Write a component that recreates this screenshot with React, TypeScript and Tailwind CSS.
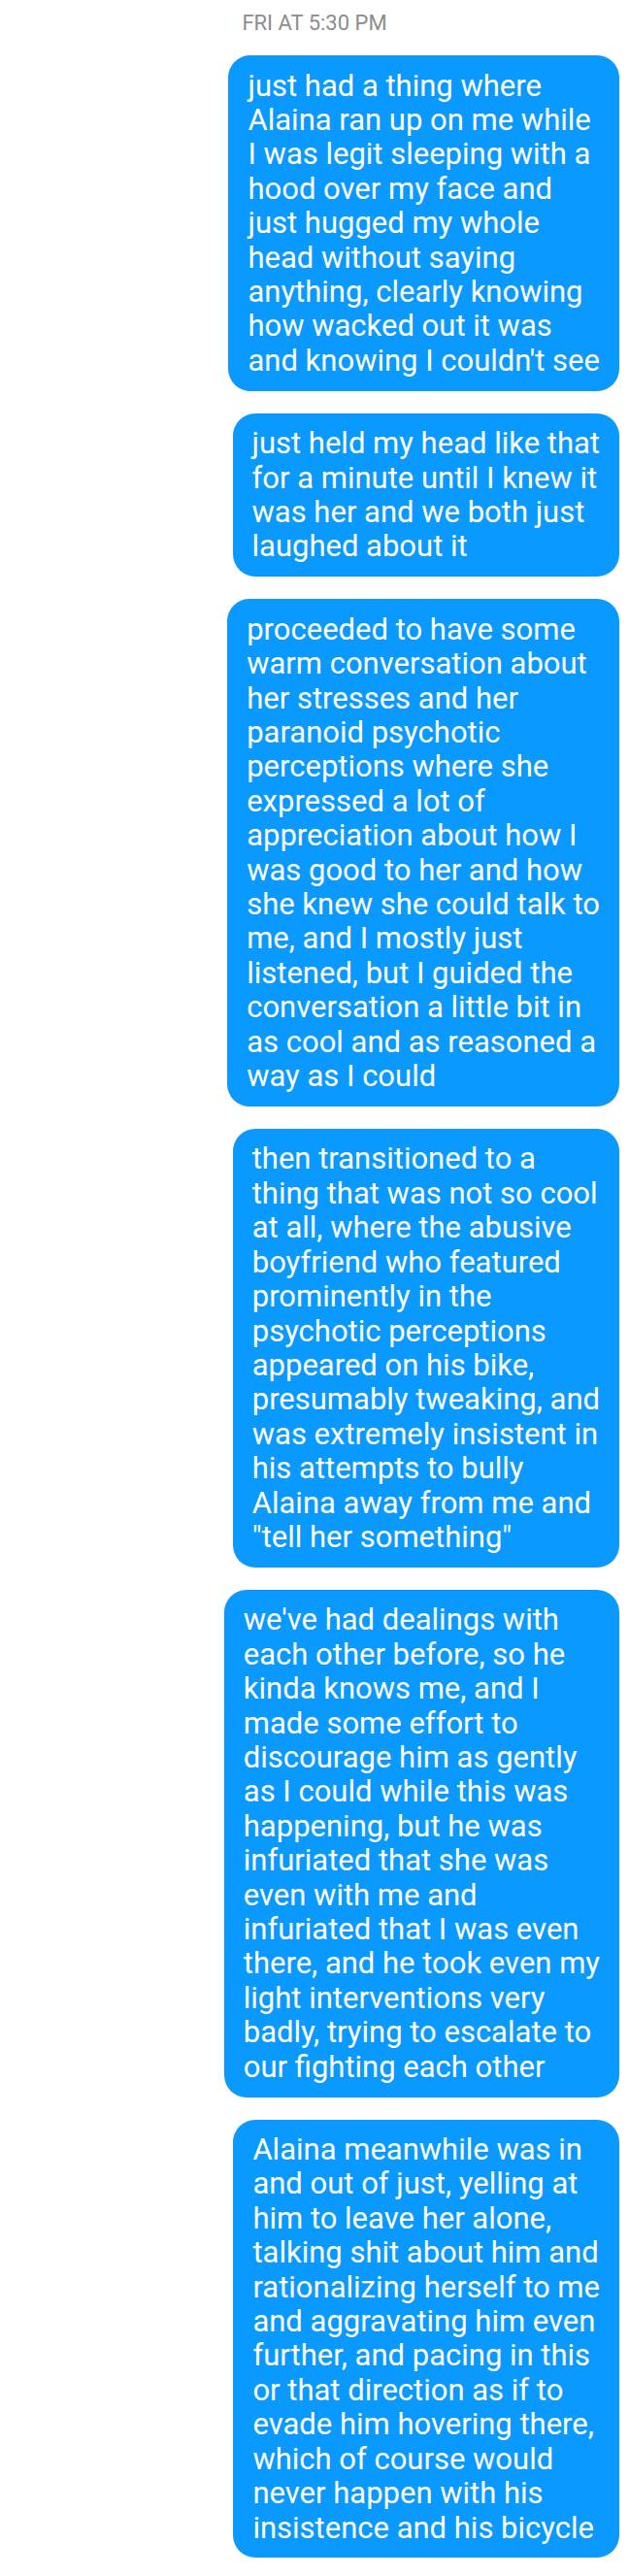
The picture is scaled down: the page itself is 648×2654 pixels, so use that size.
import React from 'react';

const messages: string[][] = [
    [
        'just had a thing where',
        'Alaina ran up on me while',
        'I was legit sleeping with a',
        'hood over my face and',
        'just hugged my whole',
        'head without saying',
        'anything, clearly knowing',
        'how wacked out it was',
        "and knowing I couldn't see",
    ],
    [
        'just held my head like that',
        'for a minute until I knew it',
        'was her and we both just',
        'laughed about it',
    ],
    [
        'proceeded to have some',
        'warm conversation about',
        'her stresses and her',
        'paranoid psychotic',
        'perceptions where she',
        'expressed a lot of',
        'appreciation about how I',
        'was good to her and how',
        'she knew she could talk to',
        'me, and I mostly just',
        'listened, but I guided the',
        'conversation a little bit in',
        'as cool and as reasoned a',
        'way as I could',
    ],
    [
        'then transitioned to a',
        'thing that was not so cool',
        'at all, where the abusive',
        'boyfriend who featured',
        'prominently in the',
        'psychotic perceptions',
        'appeared on his bike,',
        'presumably tweaking, and',
        'was extremely insistent in',
        'his attempts to bully',
        'Alaina away from me and',
        '"tell her something"',
    ],
    [
        "we've had dealings with",
        'each other before, so he',
        'kinda knows me, and I',
        'made some effort to',
        'discourage him as gently',
        'as I could while this was',
        'happening, but he was',
        'infuriated that she was',
        'even with me and',
        'infuriated that I was even',
        'there, and he took even my',
        'light interventions very',
        'badly, trying to escalate to',
        'our fighting each other',
    ],
    [
        'Alaina meanwhile was in',
        'and out of just, yelling at',
        'him to leave her alone,',
        'talking shit about him and',
        'rationalizing herself to me',
        'and aggravating him even',
        'further, and pacing in this',
        'or that direction as if to',
        'evade him hovering there,',
        'which of course would',
        'never happen with his',
        'insistence and his bicycle',
    ],
];

const Bubble: React.FC<{ lines: string[] }> = ({ lines }) => (
    <div className="self-end w-fit rounded-[23px] bg-[#0a99fe] px-[20px] py-[13.5px] text-white">
        {lines.map((line, i) => (
            <div key={i} className="whitespace-nowrap text-[31px] leading-[35.4px]">
                {line}
            </div>
        ))}
    </div>
);

export default function App() {
    return (
        <div className="min-h-[2654px] w-[648px] bg-white pr-[10px] pt-[11px]" style={{ fontFamily: 'Roboto, "Noto Sans", sans-serif' }}>
            <div className="text-center text-[22px] leading-[26px] text-[#8d8d8d] pl-[10px]">FRI AT 5:30 PM</div>
            <div className="mt-[20px] flex flex-col gap-[23px]">
                {messages.map((m, i) => (
                    <Bubble key={i} lines={m} />
                ))}
            </div>
        </div>
    );
}
